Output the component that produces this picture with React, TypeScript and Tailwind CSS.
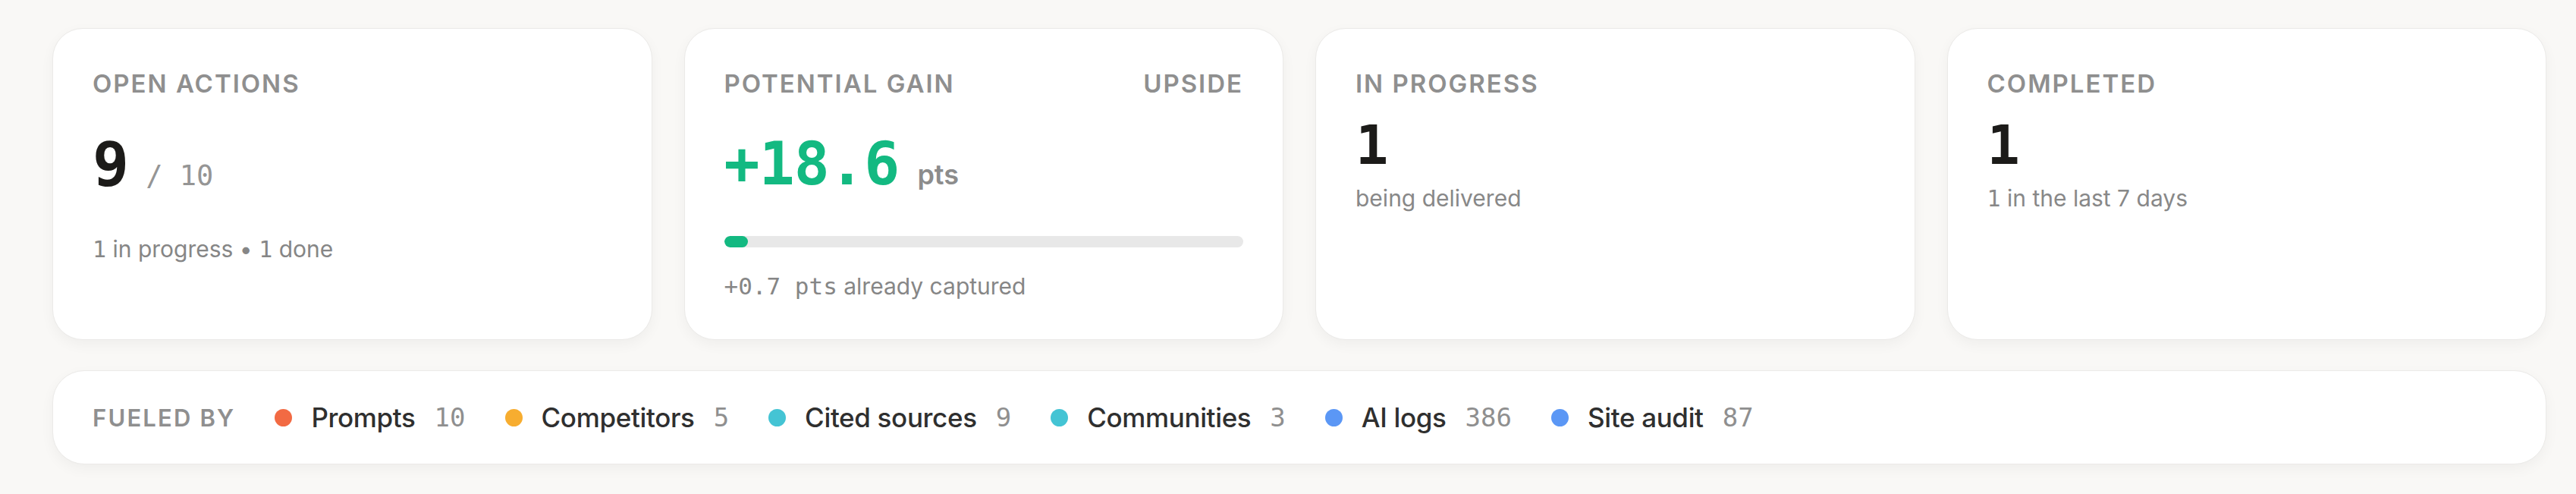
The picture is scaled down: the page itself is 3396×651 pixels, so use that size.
// Actions overview — four stat cards + "fueled by" source strip.

const SANS = "font-['Inter','Noto_Sans',sans-serif]";
const MONO = "font-['DejaVu_Sans_Mono','Liberation_Mono',monospace]";

const LABEL = 'text-[33px] leading-none font-semibold tracking-[0.06em] uppercase text-[#8f8f8f]';
const CARD =
  'rounded-[40px] bg-white border border-[#ebeae8] shadow-[0_6px_18px_rgba(0,0,0,0.045)] px-[52px] pt-[56px] pb-[54px]';

const SOURCES = [
  { label: 'Prompts', count: '10', dot: 'bg-[#f26a43]' },
  { label: 'Competitors', count: '5', dot: 'bg-[#f7ad30]' },
  { label: 'Cited sources', count: '9', dot: 'bg-[#44c4d4]' },
  { label: 'Communities', count: '3', dot: 'bg-[#44c4d4]' },
  { label: 'AI logs', count: '386', dot: 'bg-[#5b97f5]' },
  { label: 'Site audit', count: '87', dot: 'bg-[#5b97f5]' },
];

// ─── Cards ────────────────────────────────────────────────────────────────────

function OpenActions() {
  return (
    <div className={CARD}>
      <p className={LABEL}>Open actions</p>
      <div className="flex items-baseline mt-[50px]">
        <span className={`${MONO} text-[80px] leading-none font-bold text-[#1c1b19]`}>9</span>
        <span className={`${MONO} text-[37px] leading-none text-[#959595] ml-[22px]`}>/ 10</span>
      </div>
      <p className="mt-[56px] text-[30px] leading-none text-[#868686]">
        <span className={MONO}>1</span> in progress • <span className={MONO}>1</span> done
      </p>
    </div>
  );
}

function PotentialGain() {
  const pct = 0.7 / 18.6;
  return (
    <div className={CARD}>
      <div className="flex items-center justify-between">
        <p className={LABEL}>Potential gain</p>
        <p className={LABEL}>Upside</p>
      </div>
      <div className="flex items-baseline mt-[50px]">
        <span className={`${MONO} text-[78px] leading-none font-bold text-[#13b981] tracking-[-0.01em]`}>+18.6</span>
        <span className="text-[36px] leading-none font-semibold text-[#8c8c8c] ml-[24px]">pts</span>
      </div>
      <div className="mt-[56px] h-[15px] rounded-full bg-[#e8e8e8] overflow-hidden">
        <div className="h-full rounded-full bg-[#13b981] min-w-[31px]" style={{ width: `${pct * 100}%` }} />
      </div>
      <p className="mt-[36px] text-[30px] leading-none text-[#868686]">
        <span className={`${MONO} text-[31px]`}>+0.7 pts</span> already captured
      </p>
    </div>
  );
}

function SimpleStat({ label, value, children }: { label: string; value: string; children: React.ReactNode }) {
  return (
    <div className={CARD}>
      <p className={LABEL}>{label}</p>
      <p className={`${MONO} mt-[28px] text-[72px] leading-none font-bold text-[#1c1b19]`}>{value}</p>
      <p className="mt-[19px] text-[30px] leading-none text-[#888888]">{children}</p>
    </div>
  );
}

// ─── Fueled by strip ──────────────────────────────────────────────────────────

function FueledBy() {
  return (
    <div className="mt-[40px] h-[124px] rounded-[42px] bg-white border border-[#ebeae8] shadow-[0_6px_18px_rgba(0,0,0,0.045)] px-[52px] flex items-center gap-[52px]">
      <span className="text-[31px] leading-none font-semibold tracking-[0.07em] uppercase text-[#8f8f8f]">Fueled by</span>
      {SOURCES.map(s => (
        <div key={s.label} className="flex items-center">
          <span className={`w-[23px] h-[23px] rounded-full shrink-0 ${s.dot}`} />
          <span className="ml-[25px] text-[35px] leading-none font-medium text-[#2f2f2f] tracking-[-0.01em]">{s.label}</span>
          <span className={`${MONO} ml-[25px] text-[34px] leading-none text-[#8f8f8f]`}>{s.count}</span>
        </div>
      ))}
    </div>
  );
}

// ─── Main ─────────────────────────────────────────────────────────────────────

export default function App() {
  return (
    <div className={`${SANS} min-h-[651px] bg-[#f9f8f6] pl-[69px] pr-[39px] pt-[37px] pb-[39px]`}>
      <div className="grid grid-cols-4 gap-[42px]">
        <OpenActions />
        <PotentialGain />
        <SimpleStat label="In progress" value="1">being delivered</SimpleStat>
        <SimpleStat label="Completed" value="1">
          <span className={MONO}>1</span> in the last 7 days
        </SimpleStat>
      </div>
      <FueledBy />
    </div>
  );
}
